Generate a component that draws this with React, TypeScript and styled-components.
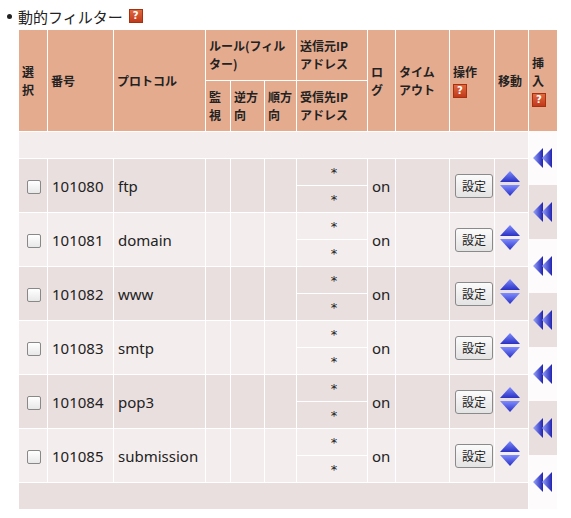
import React from "react";
import styled, { createGlobalStyle } from "styled-components";

const Global = createGlobalStyle`
  body { margin: 0; background: #fff; font-family: "Noto Sans", "Noto Sans CJK JP", sans-serif; color: #222; }
`;

const Page = styled.div`padding: 4px 0 0 0;`;
const Title = styled.div`
  display: flex; align-items: center; height: 24px; font-size: 15px; padding-left: 7px;
  font-family: "Noto Sans CJK JP", sans-serif;
`;
const Bullet = styled.span`width: 5px; height: 5px; border-radius: 50%; background: #222; margin-right: 6px;`;
const Help = styled.span<{ $ml?: number }>`
  display: inline-flex; align-items: center; justify-content: center; width: 12px; height: 12px;
  background: linear-gradient(#e06a40, #c0391b); color: #fff; font-size: 10px; font-weight: bold;
  border: 1px solid #a8300f; line-height: 1; margin-left: ${p => p.$ml ?? 6}px; font-family: "DejaVu Sans", sans-serif;
  vertical-align: middle;
`;
const Wrap = styled.div`display: flex; margin-left: 18px; margin-top: 1px;`;
const Table = styled.table`
  border-collapse: collapse; width: 511px; table-layout: fixed; font-size: 15px;
  td, th { border: 1px solid #fff; padding: 0; }
`;
const Th = styled.th`
  background: #e4ab8f; font-size: 12px; font-weight: bold; text-align: left; vertical-align: middle;
  padding: 0 3px !important; line-height: 18px; height: 50px; color: #222;
  font-family: "Noto Sans CJK JP", sans-serif; overflow: hidden;
`;
const Td = styled.td<{ $light?: boolean; $center?: boolean }>`
  background: ${p => (p.$light ? "#f4eded" : "#e9dfdf")};
  height: 26px; text-align: ${p => (p.$center ? "center" : "left")}; vertical-align: middle;
  padding-left: 4px !important; line-height: 20px;
`;
const Star = styled.span`font-family: "DejaVu Sans", sans-serif; font-size: 13px;`;
const Spacer = styled.td<{ $light?: boolean }>`
  background: ${p => (p.$light ? "#f4eded" : "#e9dfdf")}; height: 26px;
`;
const Check = styled.span`
  display: inline-block; width: 12px; height: 12px; border: 1px solid #888; border-radius: 2px;
  background: linear-gradient(#fff, #e8e8e8); vertical-align: middle; margin-left: 4px;
`;
const Btn = styled.span`
  display: inline-flex; align-items: center; justify-content: center; width: 36px; height: 22px;
  border: 1px solid #8a8a8a; border-radius: 3px; background: linear-gradient(#fbfbfb, #e3e3e3);
  font-size: 12px; margin-left: 1px; font-family: "Noto Sans CJK JP", sans-serif;
`;
const InsertCol = styled.div`display: flex; flex-direction: column; width: 28px;`;
const InsertHead = styled.div`
  height: 102px; background: #e4ab8f; border-top: 1px solid #fff; box-sizing: border-box;
  display: flex; flex-direction: column; justify-content: center; padding-left: 3px;
  font-size: 12px; font-weight: bold; line-height: 18px; font-family: "Noto Sans CJK JP", sans-serif;
`;
const InsertCell = styled.div<{ $light?: boolean }>`
  height: 54px; background: ${p => (p.$light ? "#fdfbfb" : "#e9dfdf")};
  display: flex; align-items: center; justify-content: center;
`;

const Arrows = () => (
  <svg width="22" height="22" viewBox="0 0 22 22">
    <defs>
      <linearGradient id="ag" x1="0" x2="1">
        <stop offset="0" stopColor="#9aa6ff" />
        <stop offset="1" stopColor="#1f23b0" />
      </linearGradient>
    </defs>
    <polygon points="1,11 11,1 11,21" fill="url(#ag)" />
    <polygon points="10,11 20,1 20,21" fill="url(#ag)" />
  </svg>
);
const Move = () => (
  <svg width="22" height="28" viewBox="0 0 22 28">
    <defs>
      <linearGradient id="mu" x1="0" y1="0" x2="0" y2="1">
        <stop offset="0" stopColor="#7f8cff" />
        <stop offset="1" stopColor="#2a31c2" />
      </linearGradient>
    </defs>
    <polygon points="11,1 21,12 1,12" fill="url(#mu)" />
    <polygon points="1,15 21,15 11,26" fill="url(#mu)" />
  </svg>
);

const rows = [
  ["101080", "ftp"], ["101081", "domain"], ["101082", "www"],
  ["101083", "smtp"], ["101084", "pop3"], ["101085", "submission"],
];

export default function App() {
  return (
    <Page>
      <Global />
      <Title><Bullet />動的フィルター<Help>?</Help></Title>
      <Wrap>
        <Table>
          <colgroup>
            {[29, 66, 92, 25, 34, 32, 71, 28, 54, 45, 34].map((w, i) => <col key={i} style={{ width: w }} />)}
          </colgroup>
          <thead>
            <tr>
              <Th rowSpan={2}>選<br />択</Th>
              <Th rowSpan={2}>番号</Th>
              <Th rowSpan={2}>プロトコル</Th>
              <Th colSpan={3}>ルール(フィル<br />ター)</Th>
              <Th>送信元IP<br />アドレス</Th>
              <Th rowSpan={2}>ロ<br />グ</Th>
              <Th rowSpan={2}>タイム<br />アウト</Th>
              <Th rowSpan={2}>操作<br /><Help $ml={0}>?</Help></Th>
              <Th rowSpan={2}>移動</Th>
            </tr>
            <tr>
              <Th>監<br />視</Th>
              <Th>逆方<br />向</Th>
              <Th>順方<br />向</Th>
              <Th>受信先IP<br />アドレス</Th>
            </tr>
          </thead>
          <tbody>
            <tr><Spacer colSpan={11} $light /></tr>
            {rows.map(([n, p], i) => {
              const l = i % 2 === 1;
              return (
                <React.Fragment key={n}>
                  <tr>
                    <Td $light={l} rowSpan={2}><Check /></Td>
                    <Td $light={l} rowSpan={2}>{n}</Td>
                    <Td $light={l} rowSpan={2}>{p}</Td>
                    <Td $light={l} rowSpan={2} />
                    <Td $light={l} rowSpan={2} />
                    <Td $light={l} rowSpan={2} />
                    <Td $light={l} $center><Star>*</Star></Td>
                    <Td $light={l} rowSpan={2}>on</Td>
                    <Td $light={l} rowSpan={2} />
                    <Td $light={l} rowSpan={2}><Btn>設定</Btn></Td>
                    <Td $light={l} rowSpan={2}><Move /></Td>
                  </tr>
                  <tr><Td $light={l} $center><Star>*</Star></Td></tr>
                </React.Fragment>
              );
            })}
            <tr><Spacer colSpan={11} /></tr>
          </tbody>
        </Table>
        <InsertCol>
          <InsertHead>挿<br />入<span><Help $ml={0}>?</Help></span></InsertHead>
          {Array.from({ length: 7 }).map((_, i) => (
            <InsertCell key={i} $light={i % 2 === 0}><Arrows /></InsertCell>
          ))}
        </InsertCol>
      </Wrap>
    </Page>
  );
}
